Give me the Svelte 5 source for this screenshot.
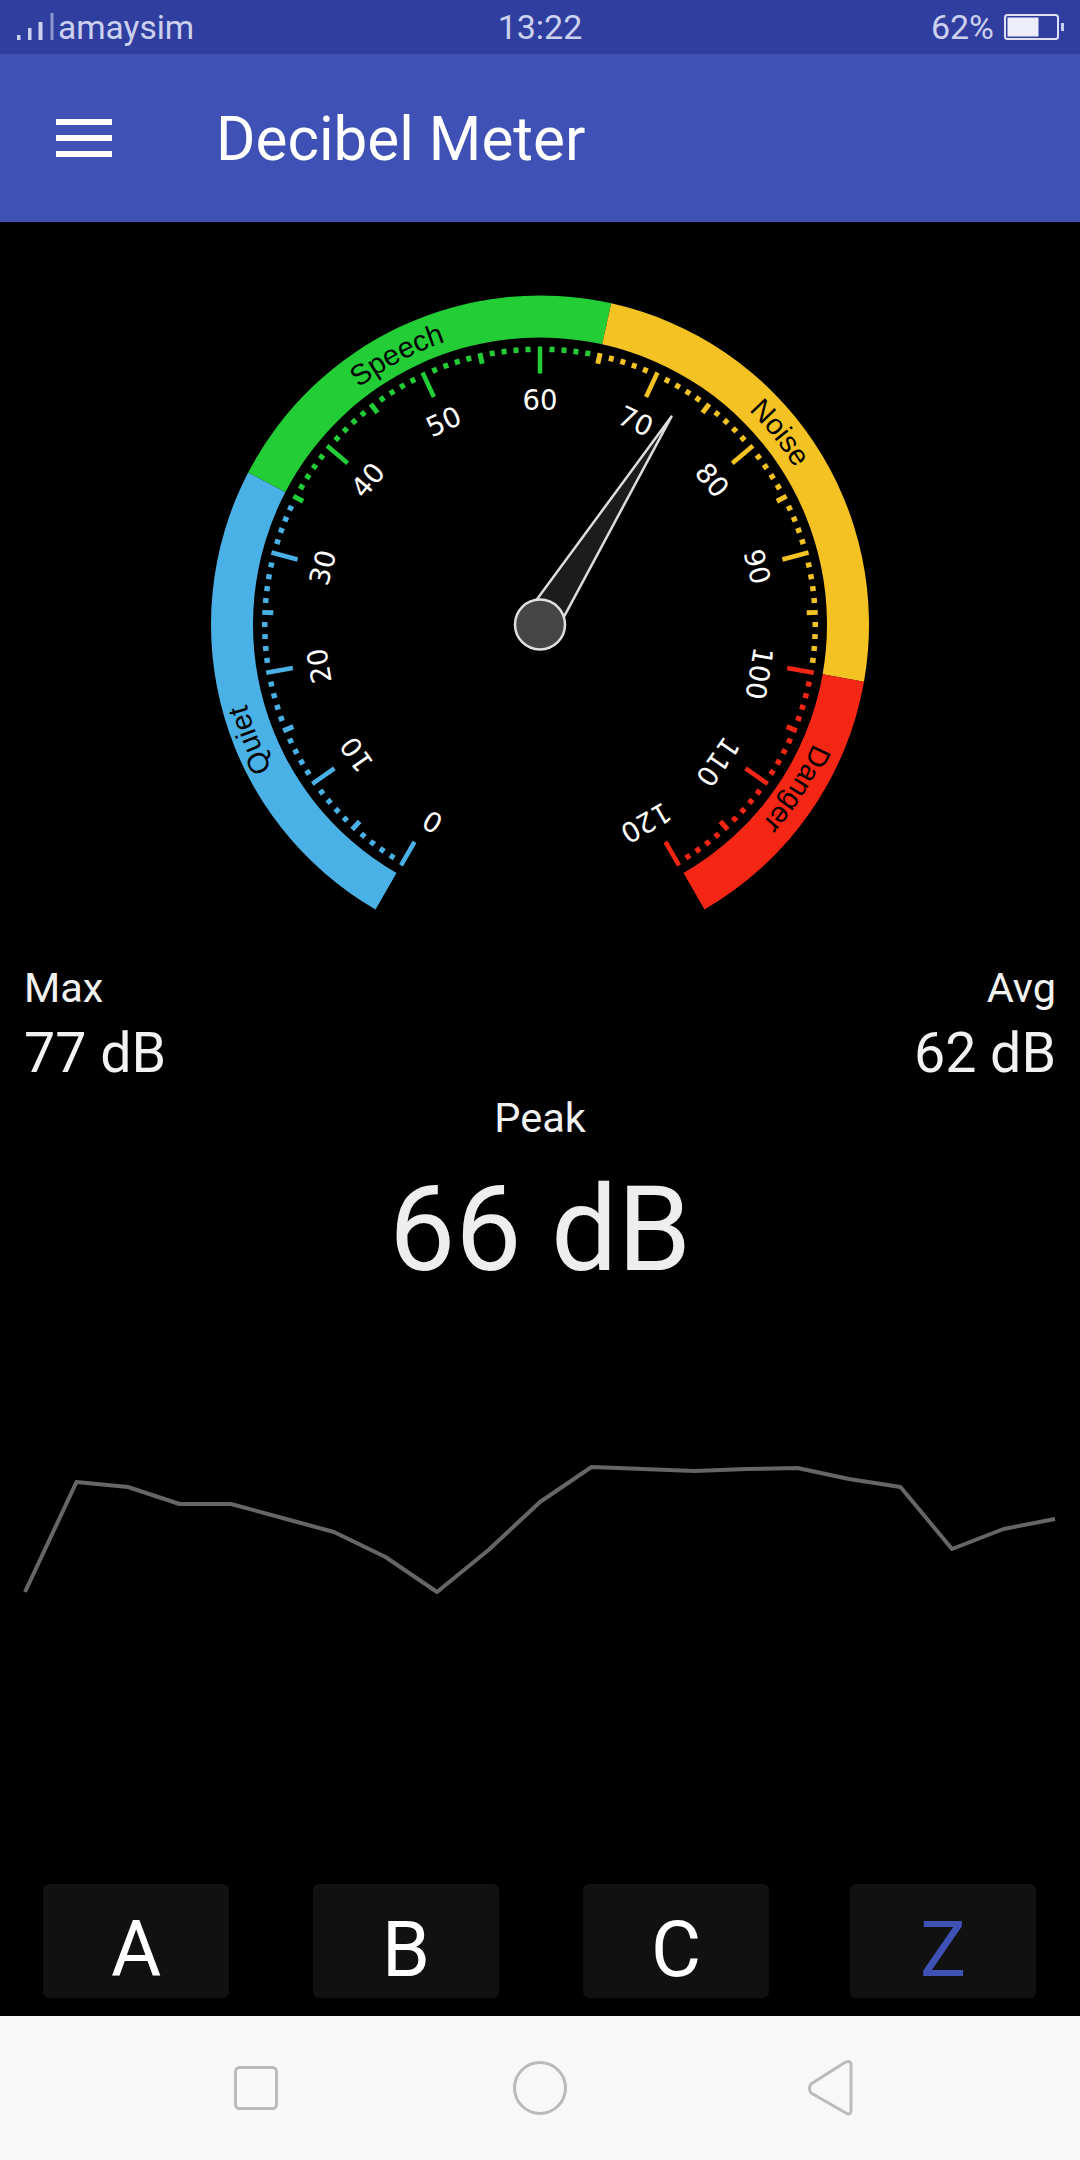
<script>
  const CX = 540, CY = 402.5;
  const pt = (a, r) => {
    const t = (a * Math.PI) / 180;
    return [CX + r * Math.sin(t), CY - r * Math.cos(t)];
  };
  const ang = (v) => -150 + v * 2.5;
  const fx = (n) => n.toFixed(2);

  const zones = [
    { from: 0, to: 35, color: '#4ab1e6' },
    { from: 35, to: 65, color: '#22cd35' },
    { from: 65, to: 100, color: '#f5c223' },
    { from: 100, to: 120, color: '#f52613' }
  ];
  const zoneColor = (v) => zones.find((z) => v < z.to || z.to === 120).color;

  const sector = (z) => {
    const R1 = 329, R0 = 287;
    const a0 = ang(z.from), a1 = ang(z.to);
    const [x0, y0] = pt(a0, R1), [x1, y1] = pt(a1, R1), [x2, y2] = pt(a1, R0), [x3, y3] = pt(a0, R0);
    return `M${fx(x0)} ${fx(y0)}A${R1} ${R1} 0 0 1 ${fx(x1)} ${fx(y1)}L${fx(x2)} ${fx(y2)}A${R0} ${R0} 0 0 0 ${fx(x3)} ${fx(y3)}Z`;
  };

  const ticks = [];
  for (let v = 0; v <= 120; v++) {
    const major = v % 10 === 0, mid = v % 5 === 0;
    const r0 = major ? 251 : mid ? 267 : 272.5;
    const [x1, y1] = pt(ang(v), 278), [x2, y2] = pt(ang(v), r0);
    ticks.push({ x1, y1, x2, y2, w: major ? 4.5 : 5, c: zoneColor(v) });
  }
  const shift = [-1.4, -0.3, -0.6, -0.3, 0, -0.4, 0, 0.2, 0, 0.1, 2.6, 2.7, 1.9];
  const labels = [];
  for (let v = 0; v <= 120; v += 10) {
    const a = ang(v);
    const [x, y] = pt(a + shift[v / 10], 225);
    labels.push({ v, x, y, a });
  }
  const names = [
    { t: 'Quiet', v: 15.3, r: 304 },
    { t: 'Speech', v: 48.8, r: 298 },
    { t: 'Noise', v: 80.5, r: 299 },
    { t: 'Danger', v: 109, r: 298 }
  ].map((n, i) => {
    const [x0, y0] = pt(-150, n.r), [x1, y1] = pt(150, n.r);
    return {
      ...n,
      id: `zone-arc-${i}`,
      d: `M${fx(x0)} ${fx(y0)}A${n.r} ${n.r} 0 1 1 ${fx(x1)} ${fx(y1)}`,
      off: (n.v / 120) * ((n.r * 300 * Math.PI) / 180)
    };
  });

  const needleA = 32.3;
  const tip = pt(needleA, 246);
  const b1 = pt(needleA - 90, 17.5);
  const b2 = pt(needleA + 90, 17.5);
  const needle = [tip, b1, b2].map((p) => p.map(fx).join(',')).join(' ');

  const series = [1592,1482,1487,1504,1504,1518,1532,1557,1592,1550,1502,1467,1469,1471,1469,1468,1479,1487,1549,1529,1519];
  const line = series.map((y, i) => `${fx(25 + i * 51.5)},${y - 1430}`).join(' ');
</script>

<div class="screen">
  <div class="status">
    <div class="s-left">
      <svg class="signal" width="38" height="30" viewBox="0 0 38 30">
        <rect x="1" y="23" width="3.5" height="5" />
        <rect x="12" y="16" width="3.5" height="12" />
        <rect x="22.5" y="10" width="4" height="18" />
        <rect x="34.5" y="1" width="3" height="27" opacity="0.6" />
      </svg>
      <span class="carrier">amaysim</span>
    </div>
    <span class="s-time">13:22</span>
    <div class="s-right">
      <span>62%</span>
      <svg class="battery" width="60" height="28" viewBox="0 0 60 28">
        <rect x="1" y="2" width="53" height="24" rx="2.5" fill="none" stroke="#dfe2f5" stroke-width="2" />
        <rect x="3.5" y="4.5" width="31" height="19" fill="#eceef9" />
        <rect x="57" y="10" width="3" height="8" fill="#c9cfee" />
      </svg>
    </div>
  </div>

  <header class="appbar">
    <div class="burger"><i></i><i></i><i></i></div>
    <h1>Decibel Meter</h1>
  </header>

  <svg class="gauge" width="1080" height="720" viewBox="0 0 1080 720">
    {#each zones as z}
      <path d={sector(z)} fill={z.color} />
    {/each}
    {#each ticks as t}
      <line x1={t.x1} y1={t.y1} x2={t.x2} y2={t.y2} stroke={t.c} stroke-width={t.w} />
    {/each}
    {#each labels as l}
      <text class="num" x={l.x} y={l.y} transform="rotate({l.a} {l.x} {l.y})" text-anchor="middle" dominant-baseline="central">{l.v}</text>
    {/each}
    {#each names as n}
      <path id={n.id} d={n.d} fill="none" />
      <text class="zone" text-anchor="middle">
        <textPath href="#{n.id}" startOffset={n.off}>{n.t}</textPath>
      </text>
    {/each}
    <polygon points={needle} fill="#1c1c1c" stroke="#dcdcdc" stroke-width="2.5" stroke-linejoin="round" />
    <circle cx={CX} cy={CY} r="25" fill="#464646" stroke="#e0e0e0" stroke-width="2.5" />
  </svg>

  <div class="stats">
    <div class="stat">
      <span class="lab">Max</span>
      <span class="val">77 dB</span>
    </div>
    <div class="stat right">
      <span class="lab">Avg</span>
      <span class="val">62 dB</span>
    </div>
  </div>
  <div class="peak">
    <span class="lab">Peak</span>
    <span class="big">66 dB</span>
  </div>

  <svg class="chart" width="1080" height="200" viewBox="0 0 1080 200">
    <polyline points={line} fill="none" stroke="#666" stroke-width="4" stroke-linejoin="round" />
  </svg>

  <div class="buttons">
    <button>A</button>
    <button>B</button>
    <button>C</button>
    <button class="sel">Z</button>
  </div>

  <nav class="nav">
    <svg width="1080" height="144" viewBox="0 0 1080 144">
      <rect x="235.5" y="51.5" width="41" height="41" rx="4" fill="none" stroke="#bbb" stroke-width="3" />
      <circle cx="540" cy="72" r="25.5" fill="none" stroke="#bbb" stroke-width="3" />
      <path d="M851 49.5V94q0 6-5 3L811 77q-3-5 0-9l33-21q7-4 7 2.5Z" fill="none" stroke="#bbb" stroke-width="3" stroke-linejoin="round" />
    </svg>
  </nav>
</div>

<style>
  :global(body) { margin: 0; background: #000; }
  .screen {
    width: 1080px;
    height: 2160px;
    background: #000;
    display: flex;
    flex-direction: column;
    font-family: Roboto, sans-serif;
    overflow: hidden;
  }
  .status {
    height: 54px;
    background: #303f9f;
    color: #ccd1ef;
    font-size: 34px;
    display: grid;
    grid-template-columns: 1fr auto 1fr;
    align-items: center;
    padding: 0 16px;
    box-sizing: border-box;
  }
  .s-left { display: flex; align-items: center; gap: 4px; }
  .carrier { font-size: 33.5px; }
  .signal { fill: #ccd1ef; }
  .s-right { display: flex; justify-content: flex-end; align-items: center; gap: 10px; }
  .appbar {
    height: 168px;
    background: #3f51b5;
    display: flex;
    align-items: center;
    padding-left: 56px;
  }
  .burger { width: 56px; display: flex; flex-direction: column; gap: 10px; margin-top: -1px; }
  .burger i { display: block; height: 6px; background: #fff; }
  h1 {
    margin: 2px 0 0 104px;
    font-size: 60.2px;
    font-weight: 400;
    color: #fff;
  }
  .gauge { display: block; flex: none; }
  .stats {
    display: flex;
    justify-content: space-between;
    padding: 0 24px;
    margin-top: 22px;
  }
  .stat { display: flex; flex-direction: column; }
  .stat.right { align-items: flex-end; }
  .lab { font-size: 41.5px; line-height: 48px; color: #f2f2f2; }
  .val { font-size: 55.5px; line-height: 64px; color: #f2f2f2; margin-top: 10px; }
  .peak {
    display: flex;
    flex-direction: column;
    align-items: center;
    margin-top: 8px;
  }
  .big { font-size: 118px; line-height: 130px; color: #eee; margin-top: 23px; }
  .chart { display: block; flex: none; margin-top: 135px; }
  .buttons {
    display: flex;
    gap: 84px;
    padding: 0 44px 0 43px;
    margin-top: 254px;
  }
  button {
    width: 186px;
    height: 114px;
    flex: none;
    background: #111;
    border: 0;
    border-radius: 6px;
    color: #fff;
    font: 400 77px Roboto, sans-serif;
    padding: 18px 0 0;
    line-height: 96px;
  }
  button.sel { color: #3f51b5; margin-left: -3px; }
  .nav {
    height: 144px;
    background: #f8f8f8;
    margin-top: 18px;
    flex: none;
  }
  .nav svg { display: block; }
  .num { font: 27.5px "DejaVu Sans", sans-serif; fill: #fff; }
  .zone { font: 29px "Liberation Sans", sans-serif; fill: #000; }
</style>
